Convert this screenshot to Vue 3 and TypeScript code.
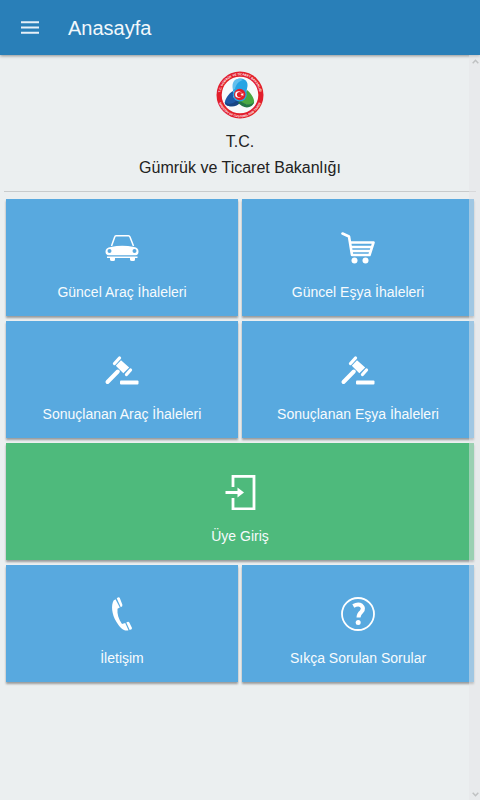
<script setup lang="ts">
type IconName = 'car' | 'cart' | 'gavel' | 'login' | 'phone' | 'help'

interface Tile {
  label: string
  icon: IconName
  wide?: boolean
}

const tiles: Tile[] = [
  { label: 'Güncel Araç İhaleleri', icon: 'car' },
  { label: 'Güncel Eşya İhaleleri', icon: 'cart' },
  { label: 'Sonuçlanan Araç İhaleleri', icon: 'gavel' },
  { label: 'Sonuçlanan Eşya İhaleleri', icon: 'gavel' },
  { label: 'Üye Giriş', icon: 'login', wide: true },
  { label: 'İletişim', icon: 'phone' },
  { label: 'Sıkça Sorulan Sorular', icon: 'help' },
]
</script>

<template>
  <div class="app">
    <header class="bar">
      <button class="menu" type="button" aria-label="Menü">
        <svg viewBox="0 0 18 13" width="18" height="13">
          <path d="M0 1.200h18M0 6.500h18M0 11.800h18" stroke="#e6f0f7" stroke-width="2" />
        </svg>
      </button>
      <h1 class="title">Anasayfa</h1>
    </header>

    <main class="content">
      <section class="brand">
        <svg class="logo" viewBox="0 0 48 48" width="48" height="48" aria-hidden="true">
          <defs>
            <path id="ring-top" d="M4.600 27.400A19.700 19.700 0 1 1 43.400 27.400" />
            <path id="ring-bottom" d="M2.200 29A22.400 22.400 0 0 0 45.800 29" />
          </defs>
          <circle cx="24" cy="24" r="23.500" fill="#e21e2b" />
          <circle cx="24" cy="24" r="18.300" fill="#f7fafb" />
          <path d="M17 20C17 12 19 8 24 7.500C29 7 32 11 31.500 15L30 23L24 26Z" fill="#27a4e4" />
          <path d="M18 10C20 7.500 24 7 27 9C23 10 20 13 19 18L17 19C16 15 16.500 12 18 10Z" fill="#61bfed" />
          <path d="M17 20C13 22 8 29 9 33C12 37 20 35 25 31L22 28L17 26Z" fill="#1d59a6" />
          <path d="M8.500 31C12 34 18 33 21 29L25 31C20 37 11 37 8.500 31Z" fill="#174584" />
          <path d="M31 19C35 22 39 28 38 32C35 36 28 34 24 30L28 26Z" fill="#49a842" />
          <path d="M24 29C28 34 35 35 38 31C37 36 31 38 26 35L22 32Z" fill="#247844" />
          <circle cx="23.800" cy="23.500" r="7" fill="#27a4e4" />
          <circle cx="23.800" cy="23.500" r="5.700" fill="#e21e2b" />
          <circle cx="22.500" cy="23.500" r="3.300" fill="#fff" />
          <circle cx="23.500" cy="23.500" r="2.600" fill="#e21e2b" />
          <path d="M24.400 23.500l1.300-.4.100-1.300.8 1 1.300-.4-.8 1.100.8 1.100-1.300-.4-.8 1-.1-1.300z" fill="#fff" />
          <text class="ring"><textPath href="#ring-top" startOffset="50%" text-anchor="middle">T.C. GÜMRÜK VE TİCARET BAKANLIĞI</textPath></text>
          <text class="ring"><textPath href="#ring-bottom" startOffset="50%" text-anchor="middle">MINISTRY OF CUSTOMS AND TRADE</textPath></text>
        </svg>
        <p class="name">T.C.<br />Gümrük ve Ticaret Bakanlığı</p>
      </section>

      <nav class="tiles">
        <a v-for="tile in tiles" :key="tile.label" href="#" class="tile" :class="{ wide: tile.wide }">
          <svg class="icon" viewBox="0 0 36 36" width="36" height="36" fill="#fff" aria-hidden="true">
            <template v-if="tile.icon === 'car'">
              <path d="M7.500 16L10.700 7Q11 5.700 12 5.700H24.500Q25.500 5.700 26 7L29.500 16" fill="none" stroke="#fff" stroke-width="1.500" />
              <path fill-rule="evenodd" d="M7 17Q18 14.500 30 17Q34.500 17.500 34.500 21.500Q34.500 25.300 31.500 25.300H5Q1.500 25.300 1.500 21.500Q1.500 17.500 7 17ZM5.500 19a2 2 0 1 0 0 4a2 2 0 0 0 0-4ZM30.500 19a2 2 0 1 0 0 4a2 2 0 0 0 0-4Z" />
              <path d="M3 26.500H33.500V28H31V29.500Q31 31 29.500 31H28Q26 31 26 29.500V28H11V29.500Q11 31 9.500 31H8Q6 31 6 29.500V28H3Z" />
            </template>
            <template v-else-if="tile.icon === 'cart'">
              <path d="M2.500 3.500L9 6.500L12 25H29.500L33.500 12.500H11M11 17H31.500M12 21H30.500" fill="none" stroke="#fff" stroke-width="2.600" stroke-linecap="round" stroke-linejoin="round" />
              <circle cx="14.500" cy="30.500" r="3" />
              <circle cx="25.500" cy="30.500" r="3" />
            </template>
            <template v-else-if="tile.icon === 'gavel'">
              <path d="M13.800 19.500L3.500 30" stroke="#fff" stroke-width="4" stroke-linecap="round" />
              <path d="M10.500 11.500L15.500 6M22.500 22.500L26.500 18" stroke="#fff" stroke-width="3.300" stroke-linecap="round" />
              <path d="M17 8.200L25.200 15.500L19.300 21.300L11.800 13.700Z" />
              <rect x="16" y="28.500" width="18.500" height="4" rx="1" />
            </template>
            <template v-else-if="tile.icon === 'login'">
              <path d="M11 13V2.300H32V35H11V24" fill="none" stroke="#fff" stroke-width="2.800" />
              <path d="M3.500 18.500H17" stroke="#fff" stroke-width="3" />
              <path d="M15.500 13.500L22 18.500L15.500 23.500Z" />
            </template>
            <template v-else-if="tile.icon === 'phone'">
              <path d="M11.500 3.200L9.600 4.500C7 9 7.500 18 12.500 26C16 32 20 35.500 24.500 34.300L21.200 27L18 28C14.500 23 13 18.500 13.500 12.800L15.800 11.500Z" />
              <path d="M12.700 2.300Q15 .5 15.800 2L18.400 8.700Q18.800 10.300 16.800 11.200ZM22.300 26.600Q24.500 25 25.300 26.500L28 32Q28.400 33.500 25.700 34Z" />
            </template>
            <template v-else>
              <circle cx="18" cy="18" r="16" fill="none" stroke="#fff" stroke-width="1.800" />
              <path d="M13.300 10Q18.200 7.300 21.300 9.500Q24.500 12.300 21.500 15.800Q18.600 18.300 18.500 21.500" fill="none" stroke="#fff" stroke-width="4" />
              <circle cx="18.200" cy="26.500" r="2.500" />
            </template>
          </svg>
          <span class="label">{{ tile.label }}</span>
        </a>
      </nav>

      <div class="scroll" aria-hidden="true">
        <svg viewBox="0 0 7 5" width="7" height="5"><path d="M.7 4.200L3.500 1.300L6.300 4.200" /></svg>
        <svg viewBox="0 0 7 5" width="7" height="5"><path d="M.7.8L3.500 3.700L6.300.8" /></svg>
      </div>
    </main>
  </div>
</template>

<style>
body {
  margin: 0;
  background: #ebeff0;
}
</style>

<style scoped>
.app {
  display: flex;
  flex-direction: column;
  min-height: 100vh;
  font-family: "Liberation Sans", Arial, sans-serif;
}

.bar {
  display: flex;
  align-items: center;
  gap: 20px;
  height: 55px;
  padding: 0 12px;
  background: #297fb8;
  box-shadow: 0 1px 3px rgba(0, 0, 0, 0.4);
  position: relative;
}

.menu {
  display: flex;
  padding: 9px;
  border: 0;
  background: none;
}

.title {
  margin: 0;
  color: #f2f8fb;
  font-size: 20px;
  font-weight: 400;
  line-height: 24px;
}

.content {
  position: relative;
  flex: 1;
}

.brand {
  display: flex;
  flex-direction: column;
  align-items: center;
  gap: 10px;
  margin: 0 4px;
  padding: 16px 0 10px;
  border-bottom: 1px solid #c8cbcc;
}

.ring {
  fill: #fff;
  font-size: 3px;
  font-weight: 700;
}

.name {
  margin: 0;
  color: #222;
  font-size: 16px;
  line-height: 26px;
  text-align: center;
}

.tiles {
  display: grid;
  grid-template-columns: 1fr 1fr;
  gap: 5px 4px;
  padding: 7px 6px;
}

.tile {
  display: flex;
  flex-direction: column;
  align-items: center;
  gap: 17px;
  padding: 31px 0 15px;
  background: #58a9df;
  box-shadow: 0 2px 2px rgba(0, 0, 0, 0.35);
  color: #f7fbfd;
  text-decoration: none;
}

.wide {
  grid-column: 1 / -1;
  background: #4eba7c;
}

.label {
  font-size: 14px;
  line-height: 18px;
}

.scroll {
  position: absolute;
  top: 0;
  right: 0;
  bottom: 0;
  display: flex;
  flex-direction: column;
  align-items: flex-end;
  justify-content: space-between;
  width: 11px;
  box-sizing: border-box;
  padding: 4px 1px 3px;
  background: rgba(229, 230, 231, 0.5);
}

.scroll path {
  fill: none;
  stroke: #bfc1c2;
  stroke-width: 1.5;
}
</style>
